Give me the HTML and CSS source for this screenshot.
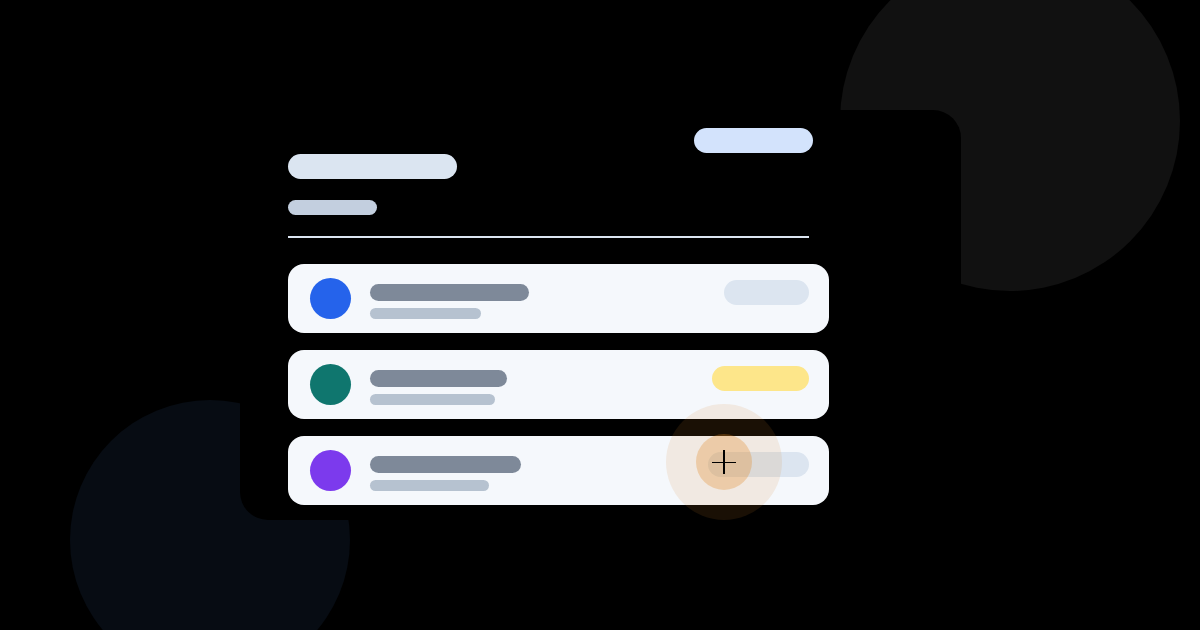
FILE: index.html
```html
<!DOCTYPE html>
<html lang="en">
<head>
<meta charset="utf-8">
<title>List</title>
<link rel="stylesheet" href="styles.css">
</head>
<body>
<div class="stage">
  <div class="blob blob-tr"></div>
  <div class="blob blob-bl"></div>
  <div class="panel">
    <div class="head">
      <div class="pill-top"></div>
      <div class="title"></div>
      <div class="subtitle"></div>
    </div>
    <div class="divider"></div>
    <div class="rows">
      <div class="row">
        <div class="avatar avatar-blue"></div>
        <div class="lines">
          <div class="line1" style="width:159px"></div>
          <div class="line2" style="width:111px"></div>
        </div>
        <div class="tag tag-gray" style="width:85px"></div>
      </div>
      <div class="row">
        <div class="avatar avatar-teal"></div>
        <div class="lines">
          <div class="line1" style="width:137px"></div>
          <div class="line2" style="width:125px"></div>
        </div>
        <div class="tag tag-yellow" style="width:97px"></div>
      </div>
      <div class="row">
        <div class="avatar avatar-purple"></div>
        <div class="lines">
          <div class="line1" style="width:151px"></div>
          <div class="line2" style="width:119px"></div>
        </div>
        <div class="tag tag-gray" style="width:101px"></div>
      </div>
    </div>
  </div>
  <div class="cursor">
    <div class="cursor-inner"></div>
    <div class="cross-h"></div>
    <div class="cross-v"></div>
  </div>
</div>
</body>
</html>
```

FILE: styles.css
```css
html, body {
  margin: 0;
  padding: 0;
  background: #000;
  font-family: "Inter", "Liberation Sans", sans-serif;
}
.stage {
  position: relative;
  width: 1200px;
  height: 630px;
  overflow: hidden;
  background: #000;
}
.blob {
  position: absolute;
  border-radius: 50%;
}
.blob-tr {
  left: 840px;
  top: -49px;
  width: 340px;
  height: 340px;
  background: #111111;
}
.blob-bl {
  left: 70px;
  top: 400px;
  width: 280px;
  height: 280px;
  background: #070c13;
}
.panel {
  position: relative;
  z-index: 1;
  box-sizing: border-box;
  margin: 0 0 0 240px;
  top: 110px;
  width: 721px;
  height: 410px;
  padding: 18px 0 0 48px;
  background: #000;
  border-radius: 28px;
}
.head {
  width: 525px;
  display: flex;
  flex-direction: column;
}
.pill-top {
  align-self: flex-end;
  width: 119px;
  height: 25px;
  border-radius: 13px;
  background: #d3e3fc;
}
.title {
  margin-top: 1px;
  width: 169px;
  height: 25px;
  border-radius: 13px;
  background: #dbe5f1;
}
.subtitle {
  margin-top: 21px;
  width: 89px;
  height: 15px;
  border-radius: 8px;
  background: #c3cfdf;
}
.divider {
  margin-top: 21px;
  width: 521px;
  height: 2px;
  background: #dbe5f1;
}
.rows {
  margin-top: 26px;
  width: 541px;
  display: flex;
  flex-direction: column;
  gap: 17px;
}
.row {
  box-sizing: border-box;
  height: 69px;
  display: flex;
  align-items: center;
  padding: 0 20px 0 22px;
  background: #f5f8fc;
  border-radius: 16px;
}
.avatar {
  width: 41px;
  height: 41px;
  border-radius: 50%;
  flex: none;
}
.avatar-blue { background: #2563eb; }
.avatar-teal { background: #0f766e; }
.avatar-purple { background: #7c3aed; }
.lines {
  margin-left: 19px;
  margin-top: 6px;
  display: flex;
  flex-direction: column;
  gap: 7px;
}
.line1 {
  height: 17px;
  border-radius: 9px;
  background: #7e8999;
}
.line2 {
  height: 11px;
  border-radius: 6px;
  background: #b6c2d0;
}
.tag {
  margin-left: auto;
  align-self: flex-start;
  margin-top: 16px;
  height: 25px;
  border-radius: 13px;
}
.tag-gray { background: #dce5f0; }
.tag-yellow { background: #fde68a; }
.cursor {
  position: absolute;
  z-index: 2;
  left: 666px;
  top: 404px;
  width: 116px;
  height: 116px;
  border-radius: 50%;
  background: rgba(215, 131, 40, 0.12);
}
.cursor-inner {
  position: absolute;
  left: 30px;
  top: 30px;
  width: 56px;
  height: 56px;
  border-radius: 50%;
  background: rgba(224, 135, 34, 0.3);
}
.cross-h {
  position: absolute;
  left: 46px;
  top: 57.5px;
  width: 24px;
  height: 1.4px;
  background: #000;
}
.cross-v {
  position: absolute;
  left: 57.3px;
  top: 46px;
  width: 1.4px;
  height: 24px;
  background: #000;
}
```
